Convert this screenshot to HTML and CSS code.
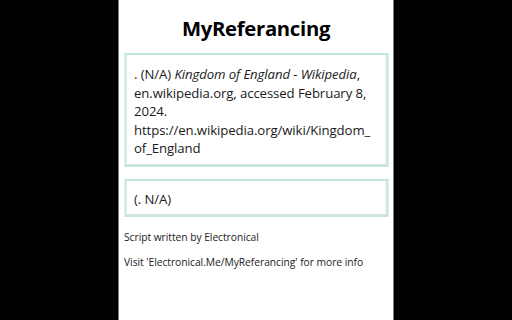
FILE: index.html
```html
<!DOCTYPE html>
<html>
<head>
<meta charset="utf-8">
<link rel="stylesheet" href="styles.css">
</head>
<body>
<div class="panel">
  <h1 class="title">MyReferancing</h1>
  <div class="box box-main">. (N/A) <i>Kingdom of England - Wikipedia</i>, en.wikipedia.org, accessed February 8, 2024. https://en.wikipedia.org/wiki/Kingdom_<wbr>of_England</div>
  <div class="box box-short">(. N/A)</div>
  <p class="note">Script written by Electronical</p>
  <p class="note">Visit 'Electronical.Me/MyReferancing' for more info</p>
</div>
</body>
</html>
```
FILE: styles.css
```css
html, body {
  margin: 0;
  padding: 0;
  background: #000;
  height: 100%;
}
.panel {
  width: 275px;
  height: 320px;
  margin: 0 auto;
  background: #fff;
  box-sizing: border-box;
  padding: 14px 5px 0 6px;
  font-family: "Open Sans", "Noto Sans", sans-serif;
  color: #1a1a1a;
  transform: translateX(-0.5px);
}
.title {
  margin: 0 0 11px;
  text-align: center;
  font-size: 20.3px;
  line-height: 28px;
  font-weight: 700;
  color: #000;
  letter-spacing: -0.3px;
}
.box {
  border: 2px solid #c3e6dc;
  box-shadow: inset -1px -1px 0 #e0e0e0;
  font-size: 13.2px;
  line-height: 18.5px;
  padding: 10px 8px 7px 8px;
  overflow-wrap: anywhere;
  letter-spacing: -0.1px;
}
.box-main {
  height: 114px;
  box-sizing: border-box;
}
.box-short {
  margin-top: 12px;
  height: 38px;
  box-sizing: border-box;
  padding-top: 9px;
}
.note {
  margin: 0;
  font-size: 10.3px;
  line-height: 14px;
  color: #222;
  letter-spacing: -0.05px;
}
.note:first-of-type {
  margin-top: 13px;
}
.note + .note {
  margin-top: 11px;
}
```
